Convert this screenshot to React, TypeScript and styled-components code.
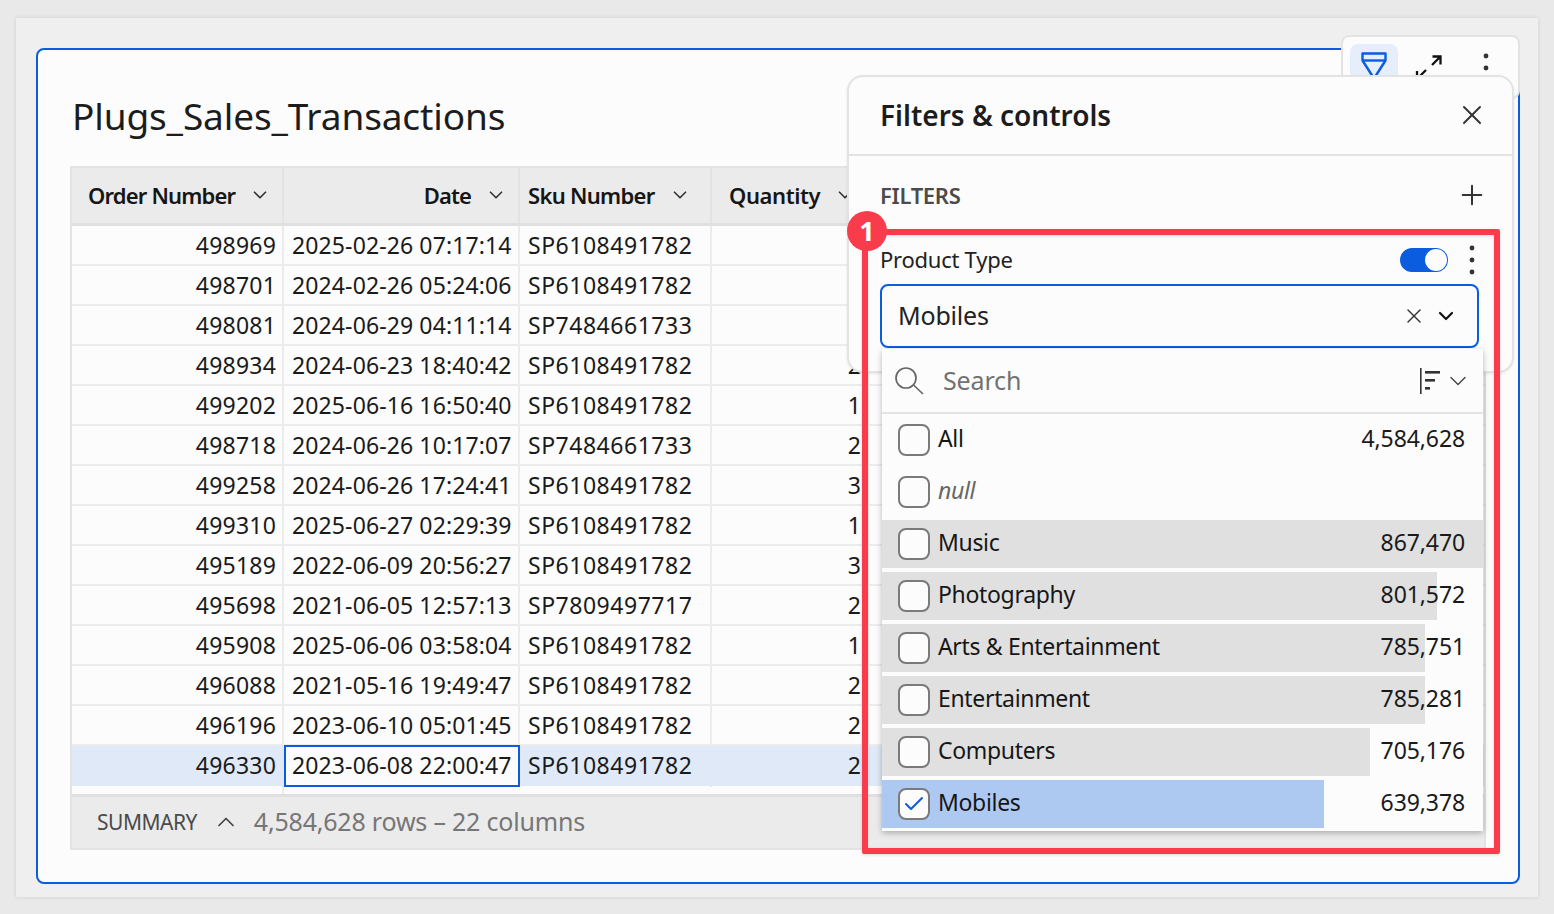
import styled, { createGlobalStyle } from "styled-components";
import { Check, ChevronDown, ChevronUp, Plus, X } from "lucide-react";

const GlobalStyle = createGlobalStyle`
  html, body {
    margin: 0;
    padding: 0;
    background: #e9e9e9;
    font-family: "Noto Sans", "Liberation Sans", sans-serif;
    color: #111;
  }
`;

const Page = styled.div`
  width: 1554px;
  height: 914px;
  box-sizing: border-box;
  padding: 18px 16px 17px;
  overflow: hidden;
`;

const Card = styled.div`
  height: 100%;
  box-sizing: border-box;
  padding: 30px 18px 13px 20px;
  background: #efefef;
  box-shadow: 0 0 4px rgba(0, 0, 0, 0.12);
`;

const Frame = styled.div`
  position: relative;
  height: 100%;
  box-sizing: border-box;
  padding: 0 32px;
  background: #fcfcfc;
  border: 2px solid #0b5cdf;
  border-radius: 8px;
`;

const Title = styled.h1`
  margin: 0 0 0 2px;
  height: 116px;
  box-sizing: border-box;
  padding-top: 14px;
  display: flex;
  align-items: center;
  font-size: 37px;
  font-weight: 400;
  letter-spacing: -0.13px;
  color: #1c1c1c;
`;

const Table = styled.div`
  width: 1416px;
  height: 684px;
  display: flex;
  flex-direction: column;
  box-sizing: border-box;
  border: 2px solid #e3e3e3;
`;

const HeaderRow = styled.div`
  display: grid;
  grid-template-columns: 212px 236px 192px 1fr;
  height: 58px;
  flex: none;
  background: #ebebeb;
  border-bottom: 3px solid #e0e0e0;
  box-sizing: border-box;
`;

const HeaderCell = styled.div<{ $right?: boolean; $inset?: number; $track?: number }>`
  display: flex;
  align-items: center;
  justify-content: ${({ $right }) => ($right ? "flex-end" : "flex-start")};
  gap: 14px;
  padding: 0 11px 1px ${({ $inset = 16 }) => $inset}px;
  border-right: 2px solid #e3e3e3;
  font-size: 22px;
  font-weight: 600;
  letter-spacing: ${({ $track = -0.4 }) => $track}px;
  white-space: nowrap;
  color: #161616;

  &:last-child {
    border-right: 0;
  }

  svg {
    width: 22px;
    height: 22px;
    stroke-width: 1.8;
    color: #333;
    flex: none;
  }
`;

const Body = styled.div`
  flex: 1;
  min-height: 0;
  overflow: hidden;
`;

const Cell = styled.div<{ $right?: boolean; $active?: boolean; $track?: number }>`
  padding: 0 6px 0 8px;
  text-align: ${({ $right }) => ($right ? "right" : "left")};
  letter-spacing: ${({ $track = 0 }) => $track}px;
  border-right: 2px solid #ececec;
  white-space: nowrap;
  overflow: hidden;
  ${({ $active }) =>
    $active &&
    `
    background: #fcfcfc;
    outline: 2px solid #0b5cdf;
    outline-offset: -2px;
    border-right: 0;
    margin-top: -1px;
    padding-top: 1px;
    height: 42px;
    box-sizing: border-box;
  `}
`;

const Row = styled.div<{ $selected?: boolean }>`
  display: grid;
  grid-template-columns: 212px 236px 192px 157px 1fr;
  height: 40px;
  box-sizing: border-box;
  border-bottom: 2px solid ${({ $selected }) => ($selected ? "#dfe9f8" : "#ececec")};
  background: ${({ $selected }) => ($selected ? "#dfe9f8" : "transparent")};
  font-size: 23px;
  line-height: 38px;
  color: #1a1a1a;

  ${Cell} {
    border-right-color: ${({ $selected }) => ($selected ? "#dfe9f8" : "#ececec")};
  }
`;

const Tail = styled.div`
  height: 9px;
  width: 212px;
  box-sizing: border-box;
  border-right: 2px solid #ececec;
`;

const Summary = styled.div`
  height: 54px;
  flex: none;
  box-sizing: border-box;
  display: flex;
  align-items: center;
  padding: 0 0 2px 25px;
  background: #ebebeb;
  border-top: 3px solid #e0e0e0;
`;

const SummaryLabel = styled.span`
  font-size: 21px;
  letter-spacing: -0.5px;
  color: #4a4a4a;
`;

const SummaryToggle = styled.span`
  display: flex;
  margin: 0 14px 0 15px;
  color: #444;

  svg {
    width: 28px;
    height: 28px;
    stroke-width: 1.5;
  }
`;

const SummaryInfo = styled.span`
  padding-bottom: 2px;
  font-size: 25px;
  letter-spacing: -0.2px;
  color: #767676;
`;

/* things floating over the worksheet */
const Toolbar = styled.div`
  position: absolute;
  top: -15px;
  right: -2px;
  width: 179px;
  height: 64px;
  box-sizing: border-box;
  display: flex;
  gap: 8px;
  padding: 7px 0 0 7px;
  background: #fcfcfc;
  border: 2px solid #e3e3e3;
  border-radius: 8px;
`;

const ToolButton = styled.div<{ $active?: boolean }>`
  width: 48px;
  height: 50px;
  display: flex;
  justify-content: center;
  padding-top: 8px;
  box-sizing: border-box;
  border-radius: 8px;
  background: ${({ $active }) => ($active ? "#e6eefb" : "transparent")};
`;

const Panel = styled.div`
  position: absolute;
  top: 25px;
  left: 809px;
  width: 667px;
  height: 298px;
  box-sizing: border-box;
  background: #fcfcfc;
  border: 2px solid #e3e3e3;
  border-radius: 16px;
  box-shadow: 0 1px 3px rgba(0, 0, 0, 0.08);
`;

const PanelHeader = styled.div`
  height: 79px;
  box-sizing: border-box;
  display: flex;
  align-items: center;
  justify-content: space-between;
  padding: 0 24px 1px 31px;
  border-bottom: 2px solid #e3e3e3;
`;

const PanelTitle = styled.h2`
  margin: 0;
  font-size: 28px;
  font-weight: 600;
  letter-spacing: 0;
  color: #1c1c1c;
`;

const IconWrap = styled.span`
  display: flex;
  color: #333;

  svg {
    width: 32px;
    height: 32px;
    stroke-width: 1.5;
  }
`;

const SectionRow = styled.div`
  height: 77px;
  box-sizing: border-box;
  display: flex;
  align-items: center;
  justify-content: space-between;
  padding: 1px 24px 0 31px;
`;

const SectionLabel = styled.span`
  font-size: 22px;
  font-weight: 600;
  letter-spacing: -0.3px;
  color: #4b4b4b;
`;

const Field = styled.div`
  position: relative;
  padding: 0 33px 0 31px;
`;

const FieldHead = styled.div`
  height: 51px;
  display: flex;
  align-items: center;
  justify-content: space-between;
`;

const FieldLabel = styled.span`
  font-size: 22px;
  letter-spacing: -0.25px;
  color: #222;
`;

const FieldTools = styled.div`
  display: flex;
  align-items: center;
  gap: 21px;
  padding: 2px 4px 0 0;
`;

const Toggle = styled.span`
  width: 48px;
  height: 24px;
  box-sizing: border-box;
  display: flex;
  justify-content: flex-end;
  padding: 1px;
  background: #0b5cdf;
  border-radius: 12px;

  &::after {
    content: "";
    width: 22px;
    height: 22px;
    border-radius: 50%;
    background: #fcfcfc;
  }
`;

const SelectBox = styled.div`
  height: 64px;
  box-sizing: border-box;
  display: flex;
  align-items: center;
  padding: 0 19px 0 16px;
  border: 2px solid #0b5cdf;
  border-radius: 8px;
  background: #fcfcfc;
`;

const SelectValue = styled.span`
  flex: 1;
  padding-bottom: 2px;
  font-size: 25px;
  letter-spacing: -0.2px;
  color: #222;
`;

const SelectIcons = styled.span`
  display: flex;
  align-items: center;
  gap: 8px;
  color: #333;

  svg {
    width: 24px;
    height: 24px;
    stroke-width: 1.4;
  }

  svg:last-child {
    stroke-width: 2.2;
    color: #111;
  }
`;

const Dropdown = styled.div`
  position: absolute;
  top: 116px;
  left: 33px;
  width: 601px;
  height: 482px;
  box-sizing: border-box;
  background: #fcfcfc;
  box-shadow: 0 2px 6px rgba(0, 0, 0, 0.28);
`;

const SearchRow = styled.div`
  height: 65px;
  box-sizing: border-box;
  display: flex;
  align-items: center;
  padding: 0 11px 0 12px;
  border-bottom: 2px solid #e3e3e3;
  margin-bottom: 2px;
`;

const SearchText = styled.span`
  flex: 1;
  margin-left: 17px;
  padding-bottom: 2px;
  font-size: 25px;
  letter-spacing: -0.15px;
  color: #727272;
`;

const SortIcon = styled.span`
  display: flex;
  align-items: center;
  gap: 3px;
  color: #444;

  svg:last-child {
    width: 28px;
    height: 28px;
    stroke-width: 1.2;
  }
`;

const Option = styled.div<{ $fill?: number; $color?: string }>`
  height: 48px;
  margin-bottom: 4px;
  box-sizing: border-box;
  display: flex;
  align-items: center;
  padding: 0 18px 0 16px;
  background: ${({ $fill = 0, $color = "#e0e0e0" }) =>
    `linear-gradient(to right, ${$color} ${$fill}%, transparent ${$fill}%)`};
`;

const Box = styled.span`
  width: 32px;
  height: 32px;
  flex: none;
  box-sizing: border-box;
  display: flex;
  align-items: center;
  justify-content: center;
  background: #fcfcfc;
  border: 2px solid #7a7a7a;
  border-radius: 8px;
  color: #0b5cdf;

  svg {
    width: 24px;
    height: 24px;
    stroke-width: 2;
  }
`;

const OptionLabel = styled.span<{ $empty?: boolean }>`
  flex: 1;
  margin-left: 8px;
  padding-bottom: 4px;
  font-size: 23px;
  letter-spacing: -0.33px;
  font-style: ${({ $empty }) => ($empty ? "italic" : "normal")};
  color: ${({ $empty }) => ($empty ? "#666" : "#161616")};
`;

const OptionCount = styled.span`
  padding-bottom: 4px;
  font-size: 23px;
  letter-spacing: -0.1px;
  color: #1a1a1a;
`;

const Callout = styled.div`
  position: absolute;
  top: 179px;
  left: 824px;
  width: 638px;
  height: 625px;
  box-sizing: border-box;
  border: 6px solid #f93c4b;
  border-radius: 2px;
  box-shadow: 0 1px 3px rgba(0, 0, 0, 0.14), inset 0 1px 3px rgba(0, 0, 0, 0.14);
  pointer-events: none;
`;

const CalloutBadge = styled.span`
  position: absolute;
  top: -24px;
  left: -21px;
  width: 40px;
  height: 40px;
  padding-bottom: 2px;
  box-sizing: border-box;
  display: flex;
  align-items: center;
  justify-content: center;
  border-radius: 50%;
  background: #f93c4b;
  color: #fff;
  font-size: 27px;
  font-weight: 700;
`;

const rows = [
  ["498969", "2025-02-26 07:17:14", "SP6108491782", ""],
  ["498701", "2024-02-26 05:24:06", "SP6108491782", ""],
  ["498081", "2024-06-29 04:11:14", "SP7484661733", ""],
  ["498934", "2024-06-23 18:40:42", "SP6108491782", "2"],
  ["499202", "2025-06-16 16:50:40", "SP6108491782", "1"],
  ["498718", "2024-06-26 10:17:07", "SP7484661733", "2"],
  ["499258", "2024-06-26 17:24:41", "SP6108491782", "3"],
  ["499310", "2025-06-27 02:29:39", "SP6108491782", "1"],
  ["495189", "2022-06-09 20:56:27", "SP6108491782", "3"],
  ["495698", "2021-06-05 12:57:13", "SP7809497717", "2"],
  ["495908", "2025-06-06 03:58:04", "SP6108491782", "1"],
  ["496088", "2021-05-16 19:49:47", "SP6108491782", "2"],
  ["496196", "2023-06-10 05:01:45", "SP6108491782", "2"],
  ["496330", "2023-06-08 22:00:47", "SP6108491782", "2"],
];

const options = [
  { label: "All", count: "4,584,628", fill: 0 },
  { label: "null", count: "", fill: 0, empty: true },
  { label: "Music", count: "867,470", fill: 100 },
  { label: "Photography", count: "801,572", fill: 92.3 },
  { label: "Arts & Entertainment", count: "785,751", fill: 90.3 },
  { label: "Entertainment", count: "785,281", fill: 90.3 },
  { label: "Computers", count: "705,176", fill: 81.2 },
  { label: "Mobiles", count: "639,378", fill: 73.6, color: "#aec9f1", checked: true },
];

function FunnelIcon() {
  return (
    <svg width="28" height="40" viewBox="0 0 28 40" fill="none" stroke="#0b5cdf" strokeWidth="2.4">
      <path d="M2.5 1.5h23v7l-11.5 18-11.5-18z" strokeLinejoin="round" />
      <path d="M2.5 8.5h23" />
    </svg>
  );
}

function ExpandIcon() {
  return (
    <svg width="30" height="34" viewBox="0 0 30 34" fill="none" stroke="#111" strokeWidth="2.3">
      <path d="M17 13 25.5 4.5M17.5 4.5h8v8" />
      <path d="M11 18 2 27M2 19v8h8" />
    </svg>
  );
}

function Kebab() {
  return (
    <svg width="6" height="32" viewBox="0 0 6 32" fill="#333">
      <circle cx="3" cy="4" r="2.4" />
      <circle cx="3" cy="16" r="2.4" />
      <circle cx="3" cy="28" r="2.4" />
    </svg>
  );
}

function Magnifier() {
  return (
    <svg width="32" height="32" viewBox="0 0 32 32" fill="none" stroke="#666" strokeWidth="1.7">
      <circle cx="12" cy="13" r="10" />
      <path d="M19.5 20 29 29" />
    </svg>
  );
}

function SortBars() {
  return (
    <svg width="22" height="26" viewBox="0 0 22 26" fill="#333">
      <rect x="1" y="0" width="1.6" height="26" />
      <rect x="6" y="3" width="15" height="2.6" />
      <rect x="6" y="11" width="10" height="2.6" />
      <rect x="6" y="19" width="5" height="2.6" />
    </svg>
  );
}

export default function App() {
  return (
    <>
      <GlobalStyle />
      <Page>
        <Card>
          <Frame>
            <Title>Plugs_Sales_Transactions</Title>
            <Table>
              <HeaderRow>
                <HeaderCell $track={-0.82}>
                  Order Number <ChevronDown />
                </HeaderCell>
                <HeaderCell $right $track={-0.9}>
                  Date <ChevronDown />
                </HeaderCell>
                <HeaderCell $inset={8} $track={-0.7}>
                  Sku Number <ChevronDown />
                </HeaderCell>
                <HeaderCell $inset={17}>
                  Quantity <ChevronDown />
                </HeaderCell>
              </HeaderRow>
              <Body>
                {rows.map((r, i) => (
                  <Row key={r[0]} $selected={i === rows.length - 1}>
                    <Cell $right $track={0.2}>
                      {r[0]}
                    </Cell>
                    <Cell $active={i === rows.length - 1} $track={0.12}>
                      {r[1]}
                    </Cell>
                    <Cell $track={0.52}>{r[2]}</Cell>
                    <Cell $right>{r[3]}</Cell>
                    <div />
                  </Row>
                ))}
                <Tail />
              </Body>
              <Summary>
                <SummaryLabel>SUMMARY</SummaryLabel>
                <SummaryToggle>
                  <ChevronUp />
                </SummaryToggle>
                <SummaryInfo>4,584,628 rows – 22 columns</SummaryInfo>
              </Summary>
            </Table>

            <Toolbar>
              <ToolButton $active>
                <FunnelIcon />
              </ToolButton>
              <ToolButton>
                <ExpandIcon />
              </ToolButton>
              <ToolButton>
                <Kebab />
              </ToolButton>
            </Toolbar>

            <Panel>
              <PanelHeader>
                <PanelTitle>Filters &amp; controls</PanelTitle>
                <IconWrap>
                  <X />
                </IconWrap>
              </PanelHeader>
              <SectionRow>
                <SectionLabel>FILTERS</SectionLabel>
                <IconWrap>
                  <Plus />
                </IconWrap>
              </SectionRow>
              <Field>
                <FieldHead>
                  <FieldLabel>Product Type</FieldLabel>
                  <FieldTools>
                    <Toggle />
                    <Kebab />
                  </FieldTools>
                </FieldHead>
                <SelectBox>
                  <SelectValue>Mobiles</SelectValue>
                  <SelectIcons>
                    <X />
                    <ChevronDown />
                  </SelectIcons>
                </SelectBox>
                <Dropdown>
                  <SearchRow>
                    <Magnifier />
                    <SearchText>Search</SearchText>
                    <SortIcon>
                      <SortBars />
                      <ChevronDown />
                    </SortIcon>
                  </SearchRow>
                  {options.map((o) => (
                    <Option key={o.label} $fill={o.fill} $color={o.color}>
                      <Box>{o.checked && <Check />}</Box>
                      <OptionLabel $empty={o.empty}>{o.label}</OptionLabel>
                      <OptionCount>{o.count}</OptionCount>
                    </Option>
                  ))}
                </Dropdown>
              </Field>
            </Panel>

            <Callout>
              <CalloutBadge>1</CalloutBadge>
            </Callout>
          </Frame>
        </Card>
      </Page>
    </>
  );
}
